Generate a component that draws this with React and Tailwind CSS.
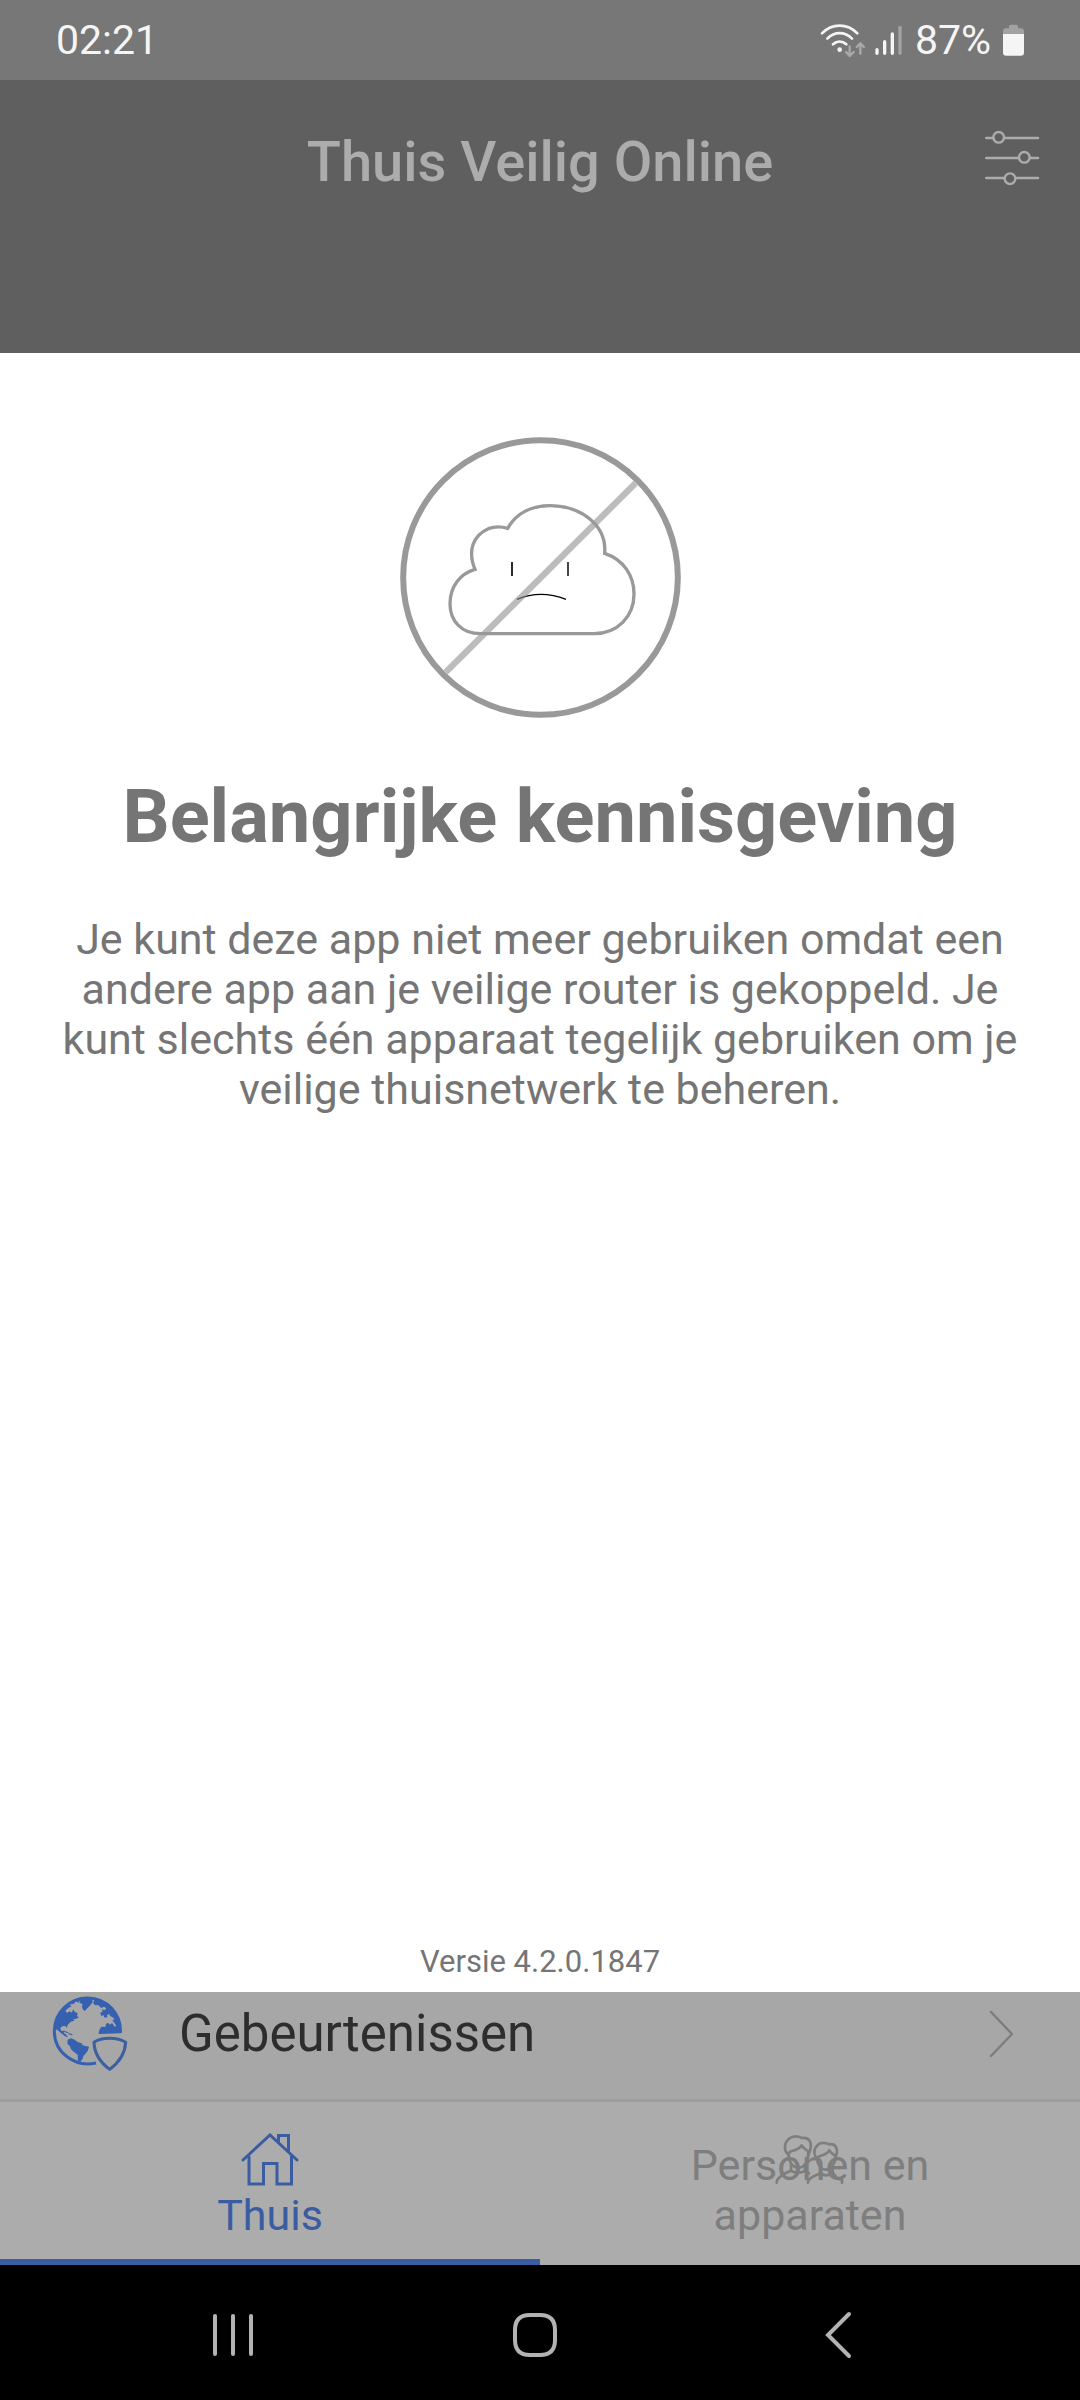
import { useState } from 'react';

function WifiIcon() {
  return (
    <svg viewBox="114 62 138 105" className="w-[46px] h-[35px]" fill="none" strokeLinecap="round" aria-hidden="true">
      <g stroke="#f5f5f5" strokeWidth="8">
        <path d="M120 93C150 62 196 62 226 93" />
        <path d="M136 109C158 87 188 87 210 109" />
        <path d="M153 126C165 115 181 115 193 126" />
      </g>
      <circle cx="173" cy="142" r="7" fill="#f5f5f5" />
      <g stroke="#a9a9a9" strokeWidth="7" strokeLinejoin="round">
        <path d="M203 132V160M192 149L203 161L215 149" />
        <path d="M235 154V124M224 134L235 123L246 134" />
      </g>
    </svg>
  );
}

function SignalIcon() {
  return (
    <svg viewBox="276 69 87 93" className="w-[29px] h-[31px]" fill="none" strokeLinecap="round" strokeWidth="10" aria-hidden="true">
      <path d="M285 143V154M308 119V154M331 96V154" stroke="#f5f5f5" />
      <path d="M354 76V154" stroke="#a2a2a2" />
    </svg>
  );
}

function BatteryIcon() {
  return (
    <svg viewBox="666 69 63 96" className="w-[21px] h-[32px]" aria-hidden="true">
      <path d="M666 99V92Q666 82 676 82H684V76Q684 71 690 71H705Q711 71 711 76V82H719Q729 82 729 92V99Z" fill="#a2a2a2" />
      <path d="M666 99H729V155Q729 164 719 164H676Q666 164 666 155Z" fill="#f5f5f5" />
    </svg>
  );
}

function SlidersIcon() {
  return (
    <svg viewBox="614 390 165 168" className="w-[55px] h-[56px]" fill="none" stroke="#acacac" strokeWidth="8" strokeLinecap="round" aria-hidden="true">
      <path d="M618 414H639M672 414H773" />
      <path d="M618 474H715M749 474H773" />
      <path d="M618 534H672M706 534H773" />
      <g strokeWidth="7">
        <circle cx="655" cy="412" r="16" />
        <circle cx="732" cy="472" r="16" />
        <circle cx="689" cy="536" r="16" />
      </g>
    </svg>
  );
}

function SadCloud() {
  return (
    <svg viewBox="60 51 843 843" className="w-[281px] h-[281px]" fill="none" aria-hidden="true">
      <path d="M411 538Q482 508 558 538" stroke="#000" strokeWidth="4" />
      <path d="M396 426V468" stroke="#000" strokeWidth="5" />
      <path d="M564 426V468" stroke="#222" strokeWidth="5" />
      <path d="M197 757L767 189" stroke="#8f8f8f" strokeOpacity="0.6" strokeWidth="19" />
      <path
        d="M302 641C244 641 210 602 210 551C210 500 240 461 285 448C262 392 279 346 325 326C344 319 363 319 383 325C409 279 456 257 510 257C603 257 681 316 674 400C731 419 762 467 762 522C762 590 712 641 642 641Z"
        stroke="#999"
        strokeWidth="10"
      />
      <circle cx="481.5" cy="472.5" r="412" stroke="#999" strokeWidth="18" />
    </svg>
  );
}

function GlobeShieldIcon() {
  return (
    <svg viewBox="66 42 228 228" className="w-[76px] h-[76px]" fill="none" aria-hidden="true">
      <path d="M198 243C133 257 73 211 73 148C73 91 119 48 173 48C230 48 275 96 271 153" stroke="#3660b0" strokeWidth="9" />
      <g fill="#3660b0">
        <path d="M75 140C77 95 107 58 150 49L146 62L138 58L130 67L123 65L118 70L126 72L114 79L106 86L111 93L119 88L125 92L130 82L134 89L143 94L141 103L147 105L137 112L130 110L133 116L122 119L113 129L110 138L106 132L97 133L91 138L94 147L103 146L101 153L109 158L114 166L105 163L93 153L83 145Z" />
        <path d="M149 49C163 45 184 46 191 48L187 54L188 60L184 66L175 76L164 87L158 82L156 72L158 66L149 63Z" />
        <path d="M196 50C239 60 270 101 272 154L206 156C206 146 210 138 215 134L226 135L228 126L234 122L240 128L246 123L251 130L255 136L258 130L253 122L247 115L254 112L247 105L240 102L238 96L231 99L232 106L224 107L220 99L215 103L210 92L218 90L216 82L224 85L229 79L222 74L214 78L204 69L195 70L190 64L191 57Z" />
        <path d="M113 173L123 169L134 173L143 180L155 184L158 190L177 194L173 207L165 217L160 222L158 230L151 239L144 237L143 218L131 209L123 202L120 193L112 185Z" />
      </g>
      <path d="M102 146L115 151L114 154L103 150ZM115 153L128 157L126 160L116 157Z" fill="#3660b0" />
      <path d="M239 166C265 167 287 172 298 180C298 221 268 254 239 276C209 255 181 222 181 180C192 171 213 166 239 166Z" fill="#a7a7a7" />
      <path d="M239 169C258 169 276 174 287 181C285 213 266 242 239 262C212 242 193 213 192 181C203 173 220 169 239 169Z" stroke="#3b5f9f" strokeWidth="9" strokeLinejoin="round" />
    </svg>
  );
}

function HouseIcon() {
  return (
    <svg viewBox="241 2132 58 54" className="w-[58px] h-[54px]" fill="none" stroke="#3a5ca0" strokeWidth="3" aria-hidden="true">
      <path d="M243 2159L270 2134L297 2159" strokeLinecap="round" />
      <path d="M249 2155V2183H263.500V2162.500H277V2183H291.500V2155" />
      <path d="M278.500 2142V2134.500H288.500V2151" />
    </svg>
  );
}

function PeopleIcon() {
  return (
    <svg viewBox="104 70 219 153" className="w-[73px] h-[51px]" fill="none" stroke="#7e7e7e" strokeWidth="8" strokeLinecap="round" strokeLinejoin="round" aria-hidden="true">
      <path d="M148 133C132 119 134 97 149 84C161 75 177 77 188 82C211 78 220 99 211 122L206 137" />
      <path d="M148 133C149 120 157 121 168 118C180 114 184 109 187 104C191 113 199 115 206 122C209 137 203 152 196 163C184 176 166 172 157 161C151 153 148 143 148 133Z" />
      <path d="M112 216C111 201 128 196 139 187L155 180C166 188 181 188 199 181L209 188M155 163V181M197 163V181" />
      <path d="M235 146C221 134 223 113 236 102C247 94 260 97 269 101C288 97 297 114 291 132L287 149" />
      <path d="M234 145C235 134 244 136 254 132C264 128 267 124 270 119C274 128 281 130 288 136C290 151 282 163 275 171C264 179 252 178 244 170C236 162 234 154 234 145Z" />
      <path d="M206 216C205 203 219 200 229 194L244 188C255 196 268 196 281 187L294 204L308 207V216M301 204L315 197M244 172V188M280 170V187" />
    </svg>
  );
}

export default function App() {
  const [tab, setTab] = useState('home');

  const tabClass = (id) =>
    tab === id
      ? 'border-[#3a5ca0] text-[#3a5ca0]'
      : 'border-transparent text-[#7e7e7e]';

  return (
    <div className="min-h-screen flex flex-col bg-white font-[Roboto,sans-serif]">
      <div className="flex items-center justify-between bg-[#777777] px-14 h-20 text-[41px] leading-[48px] text-[#f5f5f5]">
        <span>02:21</span>
        <div className="flex items-center">
          <WifiIcon />
          <div className="ml-2"><SignalIcon /></div>
          <span className="mx-3">87%</span>
          <BatteryIcon />
        </div>
      </div>

      <header className="grid grid-cols-[1fr_auto_1fr] items-start bg-[#5f5f5f] px-10 pt-[50px] pb-[159px]">
        <h1 className="col-start-2 text-[56px] leading-[64px] font-medium text-[#acacac]">Thuis Veilig Online</h1>
        <button type="button" aria-label="Instellingen" className="justify-self-end">
          <SlidersIcon />
        </button>
      </header>

      <main className="flex-1 flex flex-col items-center px-12 pt-[84px] text-center text-[#757575]">
        <SadCloud />
        <h2 className="mt-[55px] text-[74px] leading-[88px] font-bold">Belangrijke kennisgeving</h2>
        <p className="mt-[53px] text-[43px] leading-[50px]">
          Je kunt deze app niet meer gebruiken omdat een andere app aan je veilige router is gekoppeld. Je kunt slechts één apparaat tegelijk gebruiken om je veilige thuisnetwerk te beheren.
        </p>
        <p className="mt-auto pb-[10px] text-[31px] leading-[40px]">Versie 4.2.0.1847</p>
      </main>

      <a href="#gebeurtenissen" className="flex items-center bg-[#a7a7a7] border-b-3 border-[#9d9d9d] pl-[52px] pr-[66px] pt-[2px] pb-[26px]">
        <GlobeShieldIcon />
        <span className="flex-1 ml-[51px] text-[51px] leading-[79px] text-[#2d2d2d]">Gebeurtenissen</span>
        <svg viewBox="0 0 25 48" className="w-[25px] h-12" fill="none" stroke="#7e7e7e" strokeWidth="2.500" strokeLinecap="round" strokeLinejoin="round" aria-hidden="true">
          <path d="M2 2L23 24L2 46" />
        </svg>
      </a>

      <nav className="grid grid-cols-2 bg-[#acacac] text-[43px] leading-[50px]">
        <button
          type="button"
          onClick={() => setTab('home')}
          className={`flex flex-col items-center justify-between pt-[31px] pb-[19px] border-b-6 ${tabClass('home')}`}
        >
          <HouseIcon />
          <span>Thuis</span>
        </button>
        <button
          type="button"
          onClick={() => setTab('people')}
          className={`relative flex flex-col items-center pt-[38px] pb-[19px] border-b-6 ${tabClass('people')}`}
        >
          <span className="absolute inset-x-0 top-8 flex justify-center">
            <PeopleIcon />
          </span>
          <span className="max-w-[300px]">Personen en apparaten</span>
        </button>
      </nav>

      <div className="grid grid-cols-3 items-center justify-items-center bg-black h-[135px] pt-1 pl-[82px] pr-[91px]">
        <button type="button" aria-label="Recente apps">
          <svg viewBox="0 0 42 46" className="w-[42px] h-[46px]" stroke="#b3b3b3" strokeWidth="4" strokeLinecap="round" aria-hidden="true">
            <path d="M3 4V42M21 4V42M39 4V42" />
          </svg>
        </button>
        <button type="button" aria-label="Startscherm">
          <svg viewBox="0 0 46 46" className="w-[46px] h-[46px]" fill="none" stroke="#b3b3b3" strokeWidth="4" aria-hidden="true">
            <path d="M18 3H28C38 3 43 8 43 18V28C43 38 38 43 28 43H18C8 43 3 38 3 28V18C3 8 8 3 18 3Z" />
          </svg>
        </button>
        <button type="button" aria-label="Terug">
          <svg viewBox="0 0 28 48" className="w-7 h-12" fill="none" stroke="#b3b3b3" strokeWidth="4" strokeLinecap="round" aria-hidden="true">
            <path d="M25 3L4 24L25 45" />
          </svg>
        </button>
      </div>
    </div>
  );
}
